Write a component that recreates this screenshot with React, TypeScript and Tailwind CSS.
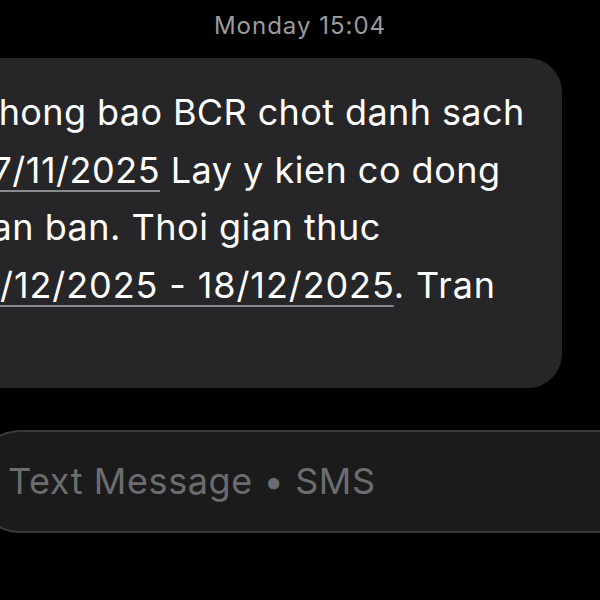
import React from 'react';

const font = { fontFamily: 'Inter, "Noto Sans", sans-serif' };

function DateLink({ children }: { children: React.ReactNode }) {
  return (
    <span className="underline decoration-[#8a8a8e] decoration-2 underline-offset-[7px]">
      {children}
    </span>
  );
}

export default function App() {
  return (
    <div className="w-[600px] h-[600px] bg-black overflow-hidden relative" style={font}>
      <div className="h-[58px] flex items-center justify-center pb-[6px] text-[24px] text-[#9b9b9f] tracking-[1px]">
        Monday 15:04
      </div>

      <div className="ml-[-120px] w-[682px] h-[330px] bg-[#262628] rounded-[34px] pt-[84px] pl-[120px] text-white text-[36px] leading-[57.5px] tracking-[0.4px]">
        <div className="-mt-[58px] whitespace-nowrap">
          <div className="ml-[-25px]">Thong bao BCR chot danh sach</div>
          <div className="ml-[-31px] tracking-[0.5px]">
            <DateLink>27/11/2025</DateLink> Lay y kien co dong
          </div>
          <div className="ml-[-29px] tracking-[0.5px]">van ban. Thoi gian thuc</div>
          <div className="ml-[-46px] tracking-[0.9px]">
            <DateLink>28/12/2025 - 18/12/2025</DateLink>. Tran
          </div>
        </div>
      </div>

      <div className="mt-[42px] ml-[-30px] w-[700px] h-[103px] rounded-full border-2 border-[#3a3a3c] bg-[#1b1b1c] flex items-center pl-[36px] pb-[2px] text-[36px] tracking-[0.6px] text-[#6c6c70]">
        Text Message • SMS
      </div>
    </div>
  );
}
